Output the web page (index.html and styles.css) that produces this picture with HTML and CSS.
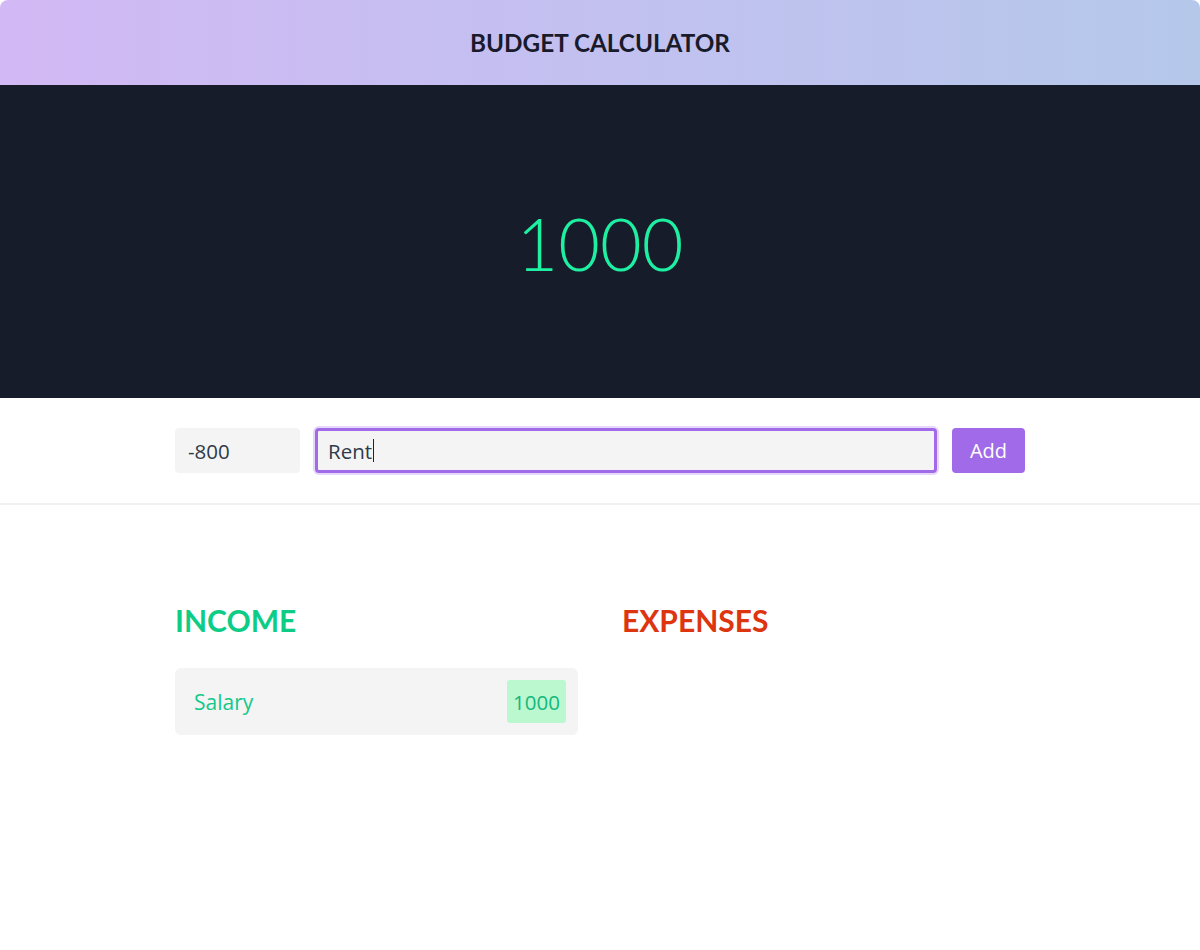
FILE: index.html
```html
<!DOCTYPE html>
<html lang="en">
<head>
<meta charset="utf-8">
<title>Budget Calculator</title>
<link rel="stylesheet" href="styles.css">
</head>
<body>
<div class="app">
  <header class="topbar">
    <h1 class="title">BUDGET CALCULATOR</h1>
  </header>
  <section class="total">
    <div class="total-value">1000</div>
  </section>
  <form class="entry" onsubmit="return false">
    <input class="field field-amount" type="text" value="-800">
    <div class="field field-desc focused"><span class="desc-text">Rent</span><span class="caret"></span></div>
    <button class="add-btn" type="button">Add</button>
  </form>
  <main class="lists">
    <section class="list">
      <h2 class="list-title income">INCOME</h2>
      <div class="item">
        <span class="item-name">Salary</span>
        <span class="item-value">1000</span>
      </div>
    </section>
    <section class="list">
      <h2 class="list-title expenses">EXPENSES</h2>
    </section>
  </main>
</div>
</body>
</html>
```

FILE: styles.css
```css
* { box-sizing: border-box; }
html, body { margin: 0; padding: 0; background: #ffffff; }
body { font-family: "Lato", "Open Sans", sans-serif; }

.app { width: 1200px; }

.topbar {
  height: 85px;
  display: flex;
  align-items: center;
  justify-content: center;
  background: linear-gradient(90deg, #d2b8f4 0%, #c5bff1 40%, #b5c8ea 100%);
  border-radius: 8px 8px 0 0;
}
.title {
  margin: 0;
  font-family: "Lato", sans-serif;
  font-weight: 700;
  font-size: 24.3px;
  color: #191a2c;
}

.total {
  height: 313px;
  background: #171c2b;
  display: flex;
  align-items: center;
  justify-content: center;
}
.total-value {
  font-family: "Lato", sans-serif;
  font-weight: 300;
  font-size: 72px;
  color: #1ef0a2;
  padding-top: 2px;
}

.entry {
  display: flex;
  gap: 15px;
  padding: 30px 175px;
  border-bottom: 2px solid #f1f1f1;
  margin: 0;
}
.field {
  height: 45px;
  border: none;
  border-radius: 4px;
  background: #f4f4f4;
  font-family: "Open Sans", sans-serif;
  font-size: 20.5px;
  color: #2f3a4a;
  padding: 0 13px;
  outline: none;
}
.field-amount { width: 125px; }
.field-desc {
  flex: 1;
  display: flex;
  align-items: center;
  border: 3px solid #a06ae8;
  box-shadow: 0 0 0 2px #e6d8fb;
  padding: 0 10px;
}
.caret {
  display: inline-block;
  width: 1px;
  height: 23px;
  background: #222;
  margin-left: 1px;
}
.add-btn {
  width: 73px;
  height: 45px;
  border: none;
  border-radius: 4px;
  background: #a06ae8;
  color: #ffffff;
  font-family: "Open Sans", sans-serif;
  font-size: 20px;
  padding: 0;
}

.lists {
  display: grid;
  grid-template-columns: 403px 403px;
  column-gap: 44px;
  padding: 96px 175px 0;
}
.list-title {
  margin: 0 0 29px;
  font-family: "Lato", sans-serif;
  font-weight: 700;
  font-size: 30px;
  line-height: 38px;
}
.income { color: #0dcd86; }
.expenses { color: #dc3510; }

.item {
  height: 67px;
  background: #f4f4f4;
  border-radius: 6px;
  display: flex;
  align-items: center;
  justify-content: space-between;
  padding: 0 12px 0 19px;
}
.item-name {
  font-family: "Open Sans", sans-serif;
  font-size: 21px;
  color: #12c98a;
}
.item-value {
  height: 43px;
  display: flex;
  align-items: center;
  padding: 0 6px;
  background: #bbf7cf;
  border-radius: 3px;
  font-family: "Open Sans", sans-serif;
  font-size: 20.5px;
  color: #14b87e;
}
```
